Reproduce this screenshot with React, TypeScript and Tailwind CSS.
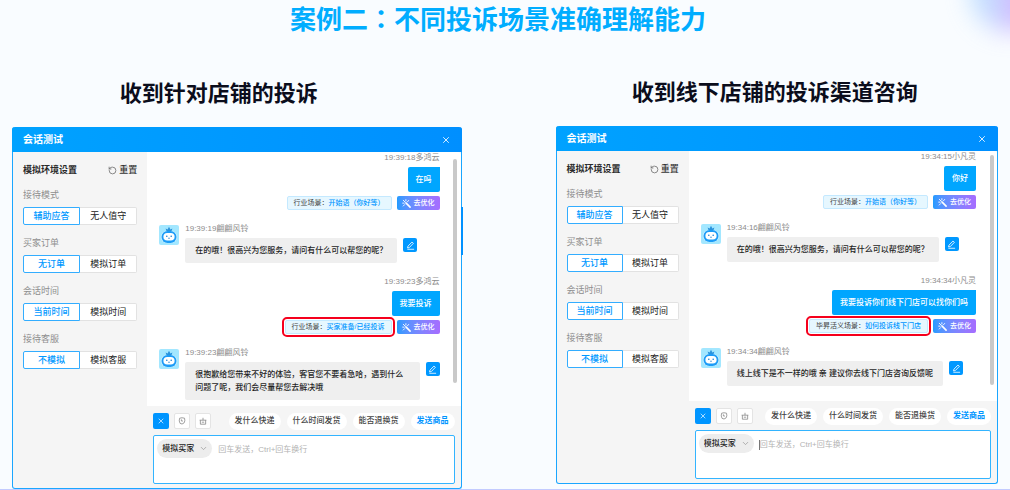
import React from "react";
import { X, RotateCcw, ChevronDown } from "lucide-react";

type UserTurn = {
  from: "user";
  meta: string;
  text: string;
  sceneLabel: string;
  scene: string;
  highlighted?: boolean;
};
type BotTurn = { from: "bot"; meta: string; text: string };
type Turn = UserTurn | BotTurn;

const SETTINGS = [
  { label: "接待模式", options: ["辅助应答", "无人值守"] },
  { label: "买家订单", options: ["无订单", "模拟订单"] },
  { label: "会话时间", options: ["当前时间", "模拟时间"] },
  { label: "接待客服", options: ["不模拟", "模拟客服"] },
];

const QUICK = ["发什么快递", "什么时间发货", "能否退换货"];

const LEFT: Turn[] = [
  { from: "user", meta: "19:39:18多鸿云", text: "在吗", sceneLabel: "行业场景：", scene: "开始语（你好等）" },
  { from: "bot", meta: "19:39:19翩翩风铃", text: "在的哦！很高兴为您服务，请问有什么可以帮您的呢？" },
  { from: "user", meta: "19:39:23多鸿云", text: "我要投诉", sceneLabel: "行业场景：", scene: "买家准备/已经投诉", highlighted: true },
  {
    from: "bot",
    meta: "19:39:23翩翩风铃",
    text: "很抱歉给您带来不好的体验，客官您不要着急哈，遇到什么问题了呢，我们会尽量帮您去解决哦",
  },
];

const RIGHT: Turn[] = [
  { from: "user", meta: "19:34:15小凡灵", text: "你好", sceneLabel: "行业场景：", scene: "开始语（你好等）" },
  { from: "bot", meta: "19:34:16翩翩风铃", text: "在的哦！很高兴为您服务，请问有什么可以帮您的呢？" },
  {
    from: "user",
    meta: "19:34:34小凡灵",
    text: "我要投诉你们线下门店可以找你们吗",
    sceneLabel: "毕昇活义场景：",
    scene: "如何投诉线下门店",
    highlighted: true,
  },
  { from: "bot", meta: "19:34:34翩翩风铃", text: "线上线下是不一样的哦 亲 建议你去线下门店咨询反馈呢" },
];

function BotAvatar() {
  return (
    <svg viewBox="0 0 20 20" className="mt-px size-5 shrink-0" aria-hidden="true">
      <rect width="20" height="20" rx="2" fill="#a3e7ff" />
      <path d="M6.600 3.600l2 1L10 1.800l1.400 2.800 2-1-1 2.800H7.600z" fill="#2a93dc" />
      <rect x="1.800" y="6" width="16.400" height="12" rx="6" fill="#d9f5ff" />
      <rect x="2.500" y="6" width="15" height="12" rx="6" fill="#1c9cf7" />
      <rect x="4.400" y="8" width="11.200" height="7.600" rx="3.800" fill="#fff" />
      <circle cx="7.800" cy="11.200" r="0.800" fill="#1a7fd0" />
      <circle cx="12.200" cy="11.200" r="0.800" fill="#1a7fd0" />
      <path d="M9 13q1 .9 2 0" stroke="#1a7fd0" strokeWidth="0.700" fill="none" />
    </svg>
  );
}

function WandIcon() {
  return (
    <svg viewBox="0 0 10 10" className="size-[9px]" fill="none" stroke="currentColor" strokeLinecap="round" aria-hidden="true">
      <path d="M4.600 4.600L9 9" strokeWidth="1.800" />
      <path d="M3.800 3.800L1.400 1.400M4.300 .8v1.400M7.400 1.600L6 3.200M.8 4.600h1.600M1.400 7.800L3 6.200" strokeWidth="1" />
    </svg>
  );
}

function EditIcon() {
  return (
    <svg viewBox="0 0 10 10" className="size-[9px]" fill="none" stroke="currentColor" strokeWidth="0.900" aria-hidden="true">
      <path d="M6.600 1.200L8.200 2.600 3.800 7.200 1.700 7.700 2.200 5.700z" strokeLinejoin="round" />
      <path d="M1.500 9.200h7.500" />
    </svg>
  );
}

function UserMessage({ turn }: { turn: UserTurn }) {
  return (
    <li className="flex flex-col items-end gap-1">
      <span className="leading-[10px] text-[#8c8c8c]">{turn.meta}</span>
      <p className="rounded-l-[2px] rounded-br-[2px] bg-[#00a6ff] px-2 py-1.5 leading-[13px] font-medium text-white">{turn.text}</p>
      <div className="flex gap-[5px] text-[7px] leading-3">
        <span
          className={
            turn.highlighted
              ? "rounded-[2px] border border-[#c4e9ff] bg-[#e6f7ff] px-1.5 text-[#444] outline-2 outline-offset-1 outline-[#f5001d]"
              : "rounded-[2px] border border-[#c4e9ff] bg-[#e6f7ff] px-1.5 text-[#444]"
          }
        >
          {turn.sceneLabel}
          <a href="#scene" className="font-medium text-[#0095ff]">
            {turn.scene}
          </a>
        </span>
        <button
          type="button"
          className="flex h-3.5 items-center gap-[3px] rounded-[2px] bg-linear-to-r from-[#1e9bff] to-[#a66cff] px-[5px] font-medium text-white"
        >
          <WandIcon />
          去优化
        </button>
      </div>
    </li>
  );
}

function BotMessage({ turn }: { turn: BotTurn }) {
  return (
    <li className="flex gap-1.5">
      <BotAvatar />
      <div className="flex flex-col gap-1">
        <span className="leading-[10px] text-[#8c8c8c]">{turn.meta}</span>
        <div className="flex items-start gap-1.5">
          <p className="max-w-[235px] rounded-[2px] bg-[#efefef] px-2.5 py-1.5 leading-[13px] font-medium text-[#1f1f1f]">{turn.text}</p>
          <button
            type="button"
            aria-label="编辑"
            className="flex size-3.5 shrink-0 items-center justify-center rounded-[2px] bg-[#0098ff] text-white"
          >
            <EditIcon />
          </button>
        </div>
      </div>
    </li>
  );
}

function Sidebar({ id }: { id: string }) {
  return (
    <aside className="w-[30%] shrink-0 px-2.5 pt-3 text-[9px]">
      <div className="mb-[13px] flex items-center justify-between leading-3">
        <h3 className="font-bold text-[#2a2a2a]">模拟环境设置</h3>
        <button type="button" className="flex items-center gap-0.5 font-medium text-[#333]">
          <RotateCcw className="size-[9px] text-[#666]" strokeWidth={2} />
          重置
        </button>
      </div>
      <div className="flex flex-col gap-3">
        {SETTINGS.map((s, i) => (
          <div key={s.label} role="group" aria-labelledby={`${id}-${i}`}>
            <div id={`${id}-${i}`} className="mb-1.5 leading-3 text-[#8e8e8e]">
              {s.label}
            </div>
            <div className="grid h-[18px] grid-cols-2 leading-4">
              <button type="button" className="rounded-l-[2px] border border-[#33adff] bg-white font-medium text-[#0098ff]">
                {s.options[0]}
              </button>
              <button type="button" className="rounded-r-[2px] border border-l-0 border-[#e2e2e2] bg-white text-[#222]">
                {s.options[1]}
              </button>
            </div>
          </div>
        ))}
      </div>
    </aside>
  );
}

function Composer({ caret }: { caret?: boolean }) {
  return (
    <div className="px-1.5 pt-[7px] pb-1">
      <div className="mb-1.5 flex h-4 items-center justify-between">
        <div className="flex gap-[5px]">
          <button type="button" aria-label="关闭" className="flex size-4 items-center justify-center rounded-[2px] bg-[#0095ff] text-white">
            <X className="size-2" strokeWidth={2} />
          </button>
          <button type="button" aria-label="表情" className="flex size-4 items-center justify-center rounded-[2px] border border-[#e4e4e4] bg-white">
            <svg viewBox="0 0 10 10" className="size-2" fill="none" stroke="#888" strokeWidth="1" aria-hidden="true">
              <path d="M2 1.500Q5 .4 8.200 1.500Q9.200 5 7.600 7.400Q5 9.800 2.600 8Q.8 5 2 1.500z" strokeLinejoin="round" />
              <path d="M4.200 3v2h2" />
            </svg>
          </button>
          <button type="button" aria-label="礼物" className="flex size-4 items-center justify-center rounded-[2px] border border-[#e4e4e4] bg-white">
            <svg viewBox="0 0 10 10" className="size-2" fill="none" stroke="#888" strokeWidth="1" aria-hidden="true">
              <path d="M.8 4h8.400M1.700 4v5h6.600V4M5 1v3M3.500 6.500h3" />
            </svg>
          </button>
        </div>
        <div className="flex gap-1.5">
          {QUICK.map((q) => (
            <button key={q} type="button" className="h-[17px] rounded-full bg-white px-1.5 font-medium text-[#444]">
              {q}
            </button>
          ))}
          <button type="button" className="h-[17px] rounded-full bg-white px-1.5 font-bold text-[#0095ff]">
            发送商品
          </button>
        </div>
      </div>
      <div className="flex h-[49px] items-start rounded-[2px] border border-[#33b4ff] bg-white p-[3px]">
        <div className="relative">
          <select
            aria-label="发送身份"
            className="h-[19px] w-[55px] appearance-none rounded-full bg-[#ededed] pl-[5px] font-medium text-[#222]"
          >
            <option>模拟买家</option>
          </select>
          <ChevronDown className="pointer-events-none absolute top-[5px] right-1 size-[9px] text-[#999]" strokeWidth={2} />
        </div>
        <span className={caret ? "mt-1.5 ml-[5px] h-2.5 w-px bg-[#777]" : "mt-1.5 ml-[5px] h-2.5 w-px"} />
        <textarea
          aria-label="消息"
          placeholder="回车发送，Ctrl+回车换行"
          className="h-9 min-w-0 flex-1 resize-none pt-[5px] leading-3 outline-none placeholder:text-[#b3b3b3]"
        />
      </div>
    </div>
  );
}

function TestWindow({ id, turns, scrollbar, caret }: { id: string; turns: Turn[]; scrollbar: string; caret?: boolean }) {
  return (
    <section className="relative rounded-[3px] border border-t-0 border-[#1aa6ff] bg-[#f5f5f5] text-[8px]">
      <header className="-mx-px flex h-[25px] items-center justify-between rounded-t-[3px] bg-linear-to-r from-[#00a2ff] to-[#008fff] px-[11px] text-white">
        <h3 className="text-[10px] font-bold">会话测试</h3>
        <button type="button" aria-label="关闭窗口">
          <X className="size-2.5" strokeWidth={2} />
        </button>
      </header>
      <div className="flex">
        <Sidebar id={id} />
        <div className="min-w-0 flex-1">
          <div className="relative min-h-[250px] rounded-tr-[3px] bg-white pt-px pr-[21px] pb-1.5 pl-3">
            <ol className="flex flex-col gap-3.5">
              {turns.map((t, i) => (t.from === "user" ? <UserMessage key={i} turn={t} /> : <BotMessage key={i} turn={t} />))}
            </ol>
            <div className={scrollbar} />
          </div>
          <Composer caret={caret} />
        </div>
      </div>
    </section>
  );
}

export default function App() {
  return (
    <main className="relative min-h-screen overflow-hidden border-b border-[#c3cbff] bg-[#f9fcff] font-['Liberation_Sans','Noto_Sans_CJK_SC',sans-serif]">
      <div className="absolute -top-12 -right-10 size-20 rounded-full bg-linear-to-r from-[#a9d4ff] from-20% to-[#c39cff] to-60% opacity-70 blur-md" />
      <h1 className="pr-3.5 text-center text-[26px] leading-10 font-bold text-[#00adff]">
        案例二<span className="font-['Noto_Sans_CJK_TC',sans-serif] leading-none" lang="zh-Hant">：</span>不同投诉场景准确理解能力
      </h1>
      <div className="grid grid-cols-[449fr_442fr] items-start gap-[94px] px-3">
        <div className="pt-[38px]">
          <h2 className="mb-[17px] pr-9 text-center text-[22px] leading-8 font-bold text-[#0b0d1c]">收到针对店铺的投诉</h2>
          <div className="relative">
            <TestWindow
              id="shop"
              turns={LEFT}
              scrollbar="absolute top-[7px] right-1 h-[88%] w-1 rounded-full bg-[#c9c9c9]"
            />
            <div className="absolute top-20 -right-px h-12 w-0.5 bg-[#0091ff]" />
          </div>
        </div>
        <div className="pt-[37px]">
          <h2 className="mb-[17px] pr-1 text-center text-[22px] leading-8 font-bold text-[#0b0d1c]">收到线下店铺的投诉渠道咨询</h2>
          <TestWindow
            id="offline"
            turns={RIGHT}
            scrollbar="absolute top-1 right-[3px] h-[92%] w-1 rounded-full bg-[#c9c9c9]"
            caret
          />
        </div>
      </div>
    </main>
  );
}
